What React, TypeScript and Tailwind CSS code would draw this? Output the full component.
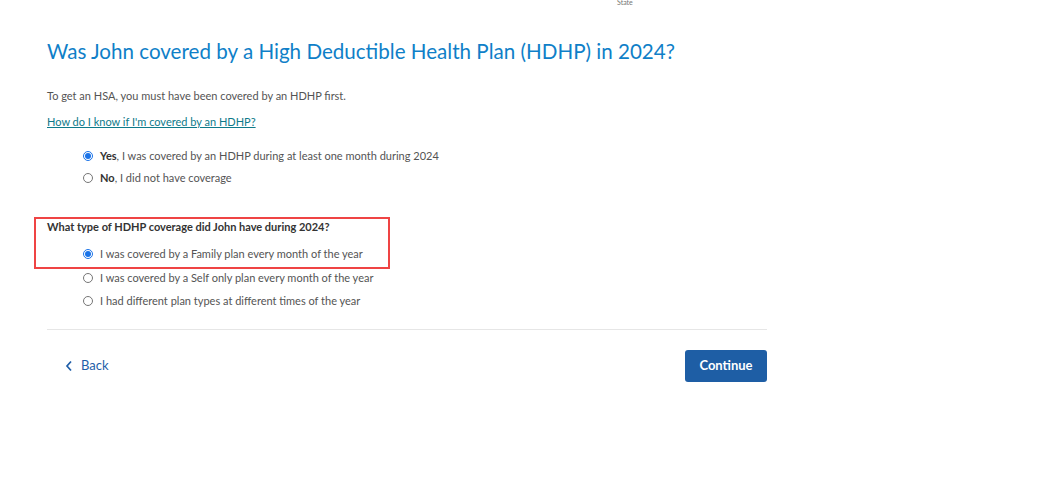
import { useState } from "react";

function Radio({ checked }: { checked: boolean }) {
  return checked ? (
    <span className="w-[10px] h-[10px] rounded-full border border-[#1a73e8] flex items-center justify-center shrink-0">
      <span className="w-[6px] h-[6px] rounded-full bg-[#1a73e8]" />
    </span>
  ) : (
    <span className="w-[10px] h-[10px] rounded-full border border-[#767676] shrink-0" />
  );
}

export default function App() {
  const [covered, setCovered] = useState("yes");
  const [plan, setPlan] = useState("family");

  const plans = [
    { id: "family", label: "I was covered by a Family plan every month of the year" },
    { id: "self", label: "I was covered by a Self only plan every month of the year" },
    { id: "mixed", label: "I had different plan types at different times of the year" },
  ];

  return (
    <div className="min-h-screen bg-white font-['Lato',sans-serif] text-[#545454]">
      <div className="relative h-[8px]">
        <span className="absolute left-[617px] top-[-3px] text-[7px] text-[#777]">State</span>
      </div>
      <div className="w-[720px] ml-[47px]">
        <h1 className="mt-[29px] text-[20.6px] leading-[28px] text-[#0f7fc8] font-normal">
          Was John covered by a High Deductible Health Plan (HDHP) in 2024?
        </h1>
        <p className="mt-[24px] text-[11px] leading-[14px]">
          To get an HSA, you must have been covered by an HDHP first.
        </p>
        <a href="#" className="inline-block mt-[12px] text-[11px] leading-[14px] text-[#0e7a8a] underline">
          How do I know if I'm covered by an HDHP?
        </a>

        <div className="mt-[17px] ml-[36px] flex flex-col gap-[8px]">
          <button onClick={() => setCovered("yes")} className="flex items-center gap-[7px] text-[11px] leading-[14px] text-left">
            <Radio checked={covered === "yes"} />
            <span><b className="text-[#333]">Yes</b>, I was covered by an HDHP during at least one month during 2024</span>
          </button>
          <button onClick={() => setCovered("no")} className="flex items-center gap-[7px] text-[11px] leading-[14px] text-left">
            <Radio checked={covered === "no"} />
            <span><b className="text-[#333]">No</b>, I did not have coverage</span>
          </button>
        </div>

        <div className="mt-[35px] relative">
          <div className="absolute left-[-13px] top-[-3px] w-[356px] h-[52px] border-2 border-[#ef4444] pointer-events-none" />
          <p className="text-[11px] leading-[14px] font-bold text-[#333]">What type of HDHP coverage did John have during 2024?</p>
          <div className="mt-[13px] ml-[36px] flex flex-col gap-[9.5px]">
            {plans.map(p => (
              <button key={p.id} onClick={() => setPlan(p.id)} className="flex items-center gap-[7px] text-[11px] leading-[14px] text-left">
                <Radio checked={plan === p.id} />
                <span>{p.label}</span>
              </button>
            ))}
          </div>
        </div>

        <div className="mt-[21px] border-t border-[#e6e6e6]" />

        <div className="mt-[20px] flex items-center justify-between">
          <button className="flex items-center gap-[8px] ml-[18px] text-[13px] text-[#1f5ea8]">
            <svg width="8" height="12" viewBox="0 0 8 12" fill="none" stroke="currentColor" strokeWidth="1.7">
              <path d="M6 1.5L2 6l4 4.5" />
            </svg>
            Back
          </button>
          <button className="w-[82px] h-[32px] rounded-[3px] bg-[#1e5ea5] text-white text-[13px] font-bold">
            Continue
          </button>
        </div>
      </div>
    </div>
  );
}
